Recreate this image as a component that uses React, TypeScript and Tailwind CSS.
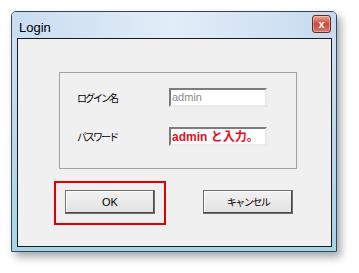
const jp = { fontFamily: '"MS UI Gothic", "Noto Sans CJK JP", sans-serif' };
const sans = { fontFamily: '"Liberation Sans", Arial, "Noto Sans CJK JP", sans-serif' };

function CloseButton() {
  return (
    <div className="w-[19px] h-[18px] rounded-[3px] border border-[#6b2a22] bg-gradient-to-b from-[#e9a197] via-[#c9493c] to-[#d9766a] flex items-center justify-center shadow-[inset_0_0_0_1px_rgba(255,255,255,0.35)]">
      <span className="text-white text-[11px] font-bold leading-none" style={sans}>
        x
      </span>
    </div>
  );
}

function TextBox({ children }: { children: React.ReactNode }) {
  return (
    <div className="w-[98px] h-[19px] bg-white border-2 border-t-[#7c7c7c] border-l-[#7c7c7c] border-b-[#eaeaea] border-r-[#eaeaea] flex items-center pl-[1px] overflow-hidden whitespace-nowrap">
      {children}
    </div>
  );
}

function Button({ children }: { children: React.ReactNode }) {
  return (
    <div className="w-[90px] h-[24px] bg-gradient-to-b from-[#f2f2f2] to-[#e2e2e2] border border-[#6e6e6e] shadow-[inset_-1px_-1px_0_#4a4a4a,inset_1px_1px_0_#ffffff] flex items-center justify-center">
      {children}
    </div>
  );
}

export default function App() {
  return (
    <div className="w-[359px] h-[273px] bg-white pl-[11px] pt-[11px] overflow-hidden">
      <div className="w-[326px] h-[241px] border border-[#34475a] rounded-t-[5px] bg-gradient-to-b from-[#d3e3f4] via-[#c0d6ee] to-[#a4d6e8] shadow-[4px_5px_8px_rgba(0,0,0,0.35)] flex flex-col">
        <div className="h-[26px] flex items-start justify-between pl-[7px] pr-[5px] pt-[3px] bg-gradient-to-r from-[#c9dcf1] via-[#e2edf8] to-[#c6daf0] rounded-t-[4px]">
          <span className="text-[13px] text-black leading-none mt-[6px]" style={sans}>
            Login
          </span>
          <CloseButton />
        </div>
        <div className="ml-[5px] mr-[4px] h-[209px] border border-[#1b1b1b] bg-[#f0f0f0] flex flex-col">
          <div className="ml-[41px] mt-[33px] w-[238px] h-[97px] border border-[#a3a3a3] flex flex-col pl-[109px] pt-[15px] gap-[20px] relative">
            <div className="flex items-center">
              <span className="absolute left-[17px] text-[10px] tracking-[-2px] text-black" style={jp}>
                ログイン名
              </span>
              <TextBox>
                <span className="text-[11px] text-[#8a8a8a] leading-none" style={sans}>
                  admin
                </span>
              </TextBox>
            </div>
            <div className="flex items-center">
              <span className="absolute left-[17px] text-[10px] tracking-[-2px] text-black" style={jp}>
                パスワード
              </span>
              <TextBox>
                <span className="text-[12px] font-bold text-[#e8101c] leading-none" style={sans}>
                  admin と入力。
                </span>
              </TextBox>
            </div>
          </div>
          <div className="flex items-start ml-[36px] mt-[12px]">
            <div className="border-2 border-[#e00000] pt-[7px] pb-[9px] pl-[9px] pr-[9px]">
              <Button>
                <span className="text-[11px] text-black leading-none" style={sans}>
                  OK
                </span>
              </Button>
            </div>
            <div className="ml-[37px] mt-[9px]">
              <Button>
                <span className="text-[10px] tracking-[-1.5px] text-black leading-none" style={jp}>
                  キャンセル
                </span>
              </Button>
            </div>
          </div>
        </div>
      </div>
    </div>
  );
}
